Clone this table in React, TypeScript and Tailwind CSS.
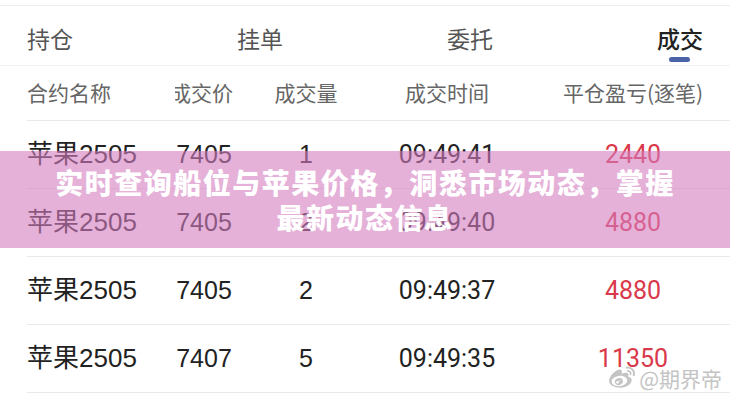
import { FaWeibo } from 'react-icons/fa';

// ---------------------------------------------------------------------------
// Data
// ---------------------------------------------------------------------------

interface Trade {
  name: string;
  price: string;
  qty: string;
  time: string;
  pnl: string;
}

const TABS = ['持仓', '挂单', '委托', '成交'];
const ACTIVE_TAB = 3;

const TRADES: Trade[] = [
  { name: '苹果2505', price: '7405', qty: '1', time: '09:49:41', pnl: '2440' },
  { name: '苹果2505', price: '7405', qty: '2', time: '09:49:40', pnl: '4880' },
  { name: '苹果2505', price: '7405', qty: '2', time: '09:49:37', pnl: '4880' },
  { name: '苹果2505', price: '7407', qty: '5', time: '09:49:35', pnl: '11350' },
];

const cjk = "font-['Noto_Sans_CJK_SC',sans-serif]";
const num = "font-['Liberation_Sans','Noto_Sans_CJK_SC',sans-serif]";
const roboto = "font-['Roboto','Noto_Sans_CJK_SC',sans-serif]";

// ---------------------------------------------------------------------------
// Component
// ---------------------------------------------------------------------------

export default function App() {
  return (
    <div className={`relative w-[730px] h-[400px] overflow-hidden bg-white ${cjk}`}>
      {/* Tabs */}
      <div className="mt-[5px] h-[60px] border-t border-[#eeeeee] flex pl-[27px]">
        {TABS.map((tab, i) => (
          <div key={tab} className="w-[210px] shrink-0 flex flex-col items-start pt-[20px]">
            <span
              className={`text-[23px] leading-[24px] ${
                i === ACTIVE_TAB ? 'text-[#222222] font-medium' : 'text-[#555555]'
              }`}
            >
              {tab}
            </span>
            {i === ACTIVE_TAB && (
              <span className="mt-[7px] ml-[12px] w-[21px] h-[5px] rounded-full bg-[#4a62a8]" />
            )}
          </div>
        ))}
      </div>

      {/* Column header */}
      <div className="border-t border-[#f3f3f3]">
        <div className="ml-[27px] h-[55px] border-b border-[#eaeaea] flex items-center text-[21px] text-[#666666]">
          <div className="w-[123px] shrink-0">合约名称</div>
          <div className="w-[108px] shrink-0 flex justify-center">
            <span className="w-[58px] flex justify-end overflow-hidden whitespace-nowrap">成交价</span>
          </div>
          <div className="w-[96px] shrink-0 text-center">成交量</div>
          <div className="w-[186px] shrink-0 text-center">成交时间</div>
          <div className="w-[186px] shrink-0 text-center">平仓盈亏(逐笔)</div>
        </div>
      </div>

      {/* Rows */}
      {TRADES.map((t, i) => (
        <div
          key={i}
          className="ml-[27px] h-[68px] border-b border-[#eaeaea] flex items-center text-[25px] text-[#222222]"
        >
          <div className={`w-[123px] shrink-0 whitespace-nowrap text-[26px] ${num}`}>{t.name}</div>
          <div className={`w-[108px] shrink-0 text-center ${num}`}>{t.price}</div>
          <div className={`w-[96px] shrink-0 text-center ${num}`}>{t.qty}</div>
          <div className={`w-[186px] shrink-0 text-center ${roboto}`}>{t.time}</div>
          <div className={`w-[186px] shrink-0 text-center text-[#d9394a] ${roboto}`}>{t.pnl}</div>
        </div>
      ))}

      {/* Caption banner */}
      <div className="absolute left-0 right-0 top-[151px] h-[97px] bg-[#d47dbf]/60 flex flex-col items-center justify-center text-white text-[28px] leading-[35px] font-black tracking-[1.5px]">
        <span>实时查询船位与苹果价格，洞悉市场动态，掌握</span>
        <span>最新动态信息</span>
      </div>

      {/* Watermark */}
      <div className="absolute right-[8px] top-[365px] flex items-center gap-[3px] text-[#c4c4c4]">
        <FaWeibo className="w-[28px] h-[26px]" />
        <span className="text-[21px] leading-[26px]">@期界帝</span>
      </div>
    </div>
  );
}
